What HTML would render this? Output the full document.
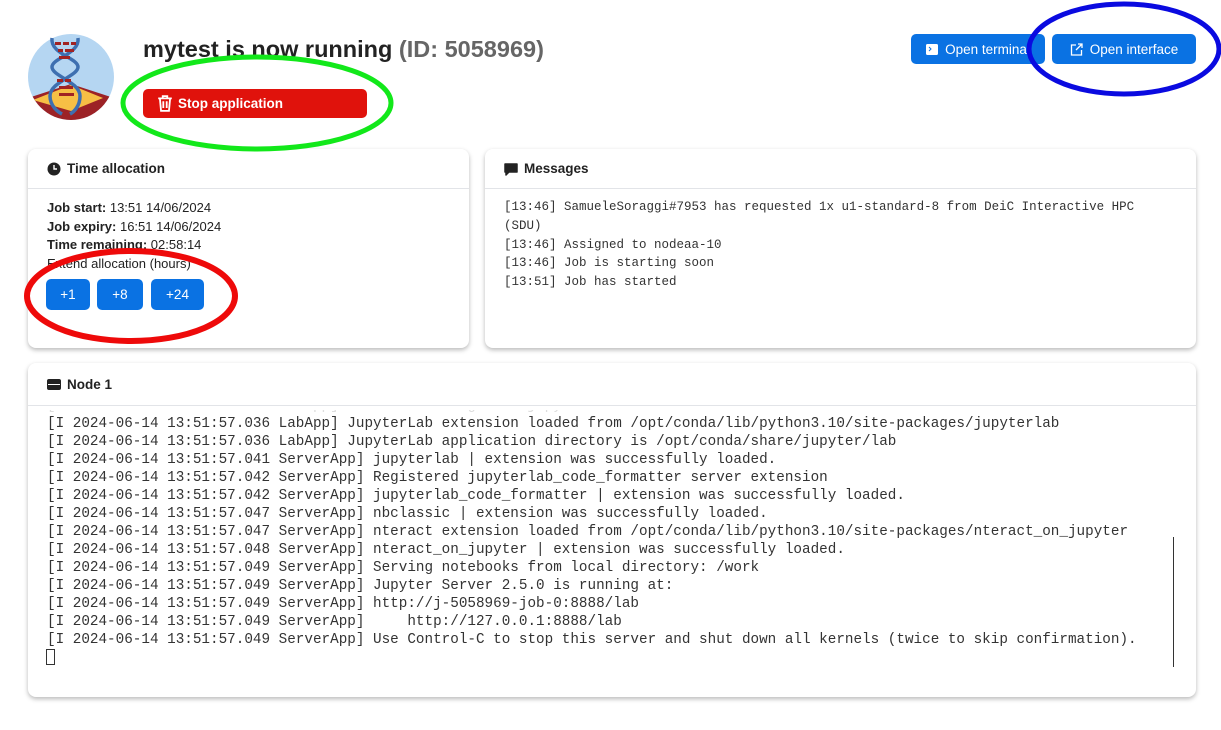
<!DOCTYPE html>
<html><head><meta charset="utf-8"><style>
*{box-sizing:border-box;margin:0;padding:0}
body{width:1221px;height:730px;background:#fff;font-family:"Liberation Sans",sans-serif;color:#222;position:relative;overflow:hidden}
.abs{position:absolute}
.card{position:absolute;background:#fff;border-radius:8px;box-shadow:0 2px 5px rgba(0,0,0,.28)}
.ch{height:40px;border-bottom:1px solid #e2e4e8;display:flex;align-items:center;padding-left:19px;font-weight:bold;font-size:13.5px;gap:6px}
.btn{position:absolute;background:#0a72e3;color:#fff;border-radius:5px;font-size:13.5px;display:flex;align-items:center;justify-content:center}
.mono{font-family:"Liberation Mono",monospace;white-space:pre;color:#333}
</style></head><body>
<svg class="abs" style="left:28px;top:34px" width="86" height="86" viewBox="0 0 86 86">
<defs><clipPath id="c"><circle cx="43" cy="43" r="43"/></clipPath></defs>
<g clip-path="url(#c)">
<rect width="86" height="86" fill="#b5d6f2"/>
<polygon points="0,64 43,50 86,64 86,86 0,86" fill="#9c2226"/>
<polygon points="5,66 43,51 75,64 43,77" fill="#f7bf45"/>
</g>
<path d="M24,4 C22,20 50,24 50,33 C50,42 22,48 22,62 C22,72 30,78 34,80" stroke="#3e6fb0" stroke-width="3.5" fill="none"/>
<path d="M50,4 C52,20 24,24 24,33 C24,42 52,48 52,62 C52,72 46,78 42,80" stroke="#3e6fb0" stroke-width="3.5" fill="none"/>
<g fill="#a12323"><rect x="27" y="8" width="6" height="3"/><rect x="35" y="8" width="6" height="3"/><rect x="43" y="8" width="5" height="3"/><rect x="30" y="15" width="5" height="3"/><rect x="37" y="15" width="9" height="3"/><rect x="31" y="22" width="11" height="3"/>
<rect x="29" y="45" width="6" height="3"/><rect x="37" y="45" width="6" height="3"/><rect x="31" y="52" width="14" height="3"/><rect x="31" y="59" width="15" height="3"/></g>
</svg>
<div class="abs" style="left:143px;top:36px;font-size:23.5px;font-weight:bold;color:#222">mytest is now running <span style="color:#666">(ID: 5058969)</span></div>
<div class="btn" style="left:143px;top:89px;width:224px;height:29px;background:#e0120c;justify-content:flex-start;padding-left:14px;font-weight:bold;font-size:13.5px;gap:5px">
<svg width="16" height="17" viewBox="0 0 14 15"><path d="M1,3h12M5,3V1h4v2M2.5,3l1,11h7l1-11M5.5,5.5v6M8.5,5.5v6" stroke="#fff" stroke-width="1.6" fill="none"/></svg>Stop application</div>
<div class="btn" style="left:911px;top:34px;width:134px;height:30px;gap:7px"><svg width="12" height="11"><rect width="12" height="11" rx="1.5" fill="#fff"/><path d="M3,3l2,2-2,2" stroke="#0a72e3" stroke-width="1" fill="none"/></svg>Open terminal</div>
<div class="btn" style="left:1052px;top:34px;width:144px;height:30px;gap:7px"><svg width="13" height="13" viewBox="0 0 13 13"><path d="M6,2H1.5v10h10V7M8,1h4v4M12,1L6,7" stroke="#fff" stroke-width="1.3" fill="none"/></svg>Open interface</div>

<div class="card" style="left:28px;top:149px;width:441px;height:199px">
<div class="ch"><svg width="14" height="14"><circle cx="7" cy="7" r="6.5" fill="#222"/><path d="M7,3v4h3" stroke="#fff" stroke-width="1.4" fill="none"/></svg>Time allocation</div>
<div style="padding:10px 0 0 19px;font-size:13px;line-height:18.7px">
<div><b>Job start:</b> 13:51 14/06/2024</div><div><b>Job expiry:</b> 16:51 14/06/2024</div><div><b>Time remaining:</b> 02:58:14</div><div>Extend allocation (hours)</div></div>
<div class="btn" style="left:18px;top:130px;width:44px;height:31px">+1</div>
<div class="btn" style="left:69px;top:130px;width:46px;height:31px">+8</div>
<div class="btn" style="left:123px;top:130px;width:53px;height:31px">+24</div>
</div>
<div class="card" style="left:485px;top:149px;width:711px;height:199px">
<div class="ch"><svg width="14" height="14"><path d="M1,2h12v8H5l-3,3v-3H1z" fill="#222" stroke="#222" stroke-linejoin="round" stroke-width="1.5"/></svg>Messages</div>
<div class="mono" style="padding:9px 0 0 19px;font-size:12.5px;line-height:18.75px">[13:46] SamueleSoraggi#7953 has requested 1x u1-standard-8 from DeiC Interactive HPC
(SDU)
[13:46] Assigned to nodeaa-10
[13:46] Job is starting soon
[13:51] Job has started</div>
</div>
<div class="card" style="left:28px;top:363px;width:1168px;height:334px;overflow:hidden">
<div class="ch" style="height:43px"><svg width="14" height="12"><rect y="1" width="14" height="11" rx="2" fill="#222"/><rect x="1" y="6" width="12" height="1" fill="#fff"/></svg>Node 1</div>
<div class="mono" style="position:absolute;left:19px;top:34px;font-size:14.3px;line-height:18px;color:#ddd;clip-path:inset(13px 0 0 0)">[I 2024-06-14 13:51:57.036 LabApp] extension manager is jupyterlab ...</div>
<div class="mono" style="position:absolute;left:19px;top:52px;font-size:14.3px;line-height:18px">[I 2024-06-14 13:51:57.036 LabApp] JupyterLab extension loaded from /opt/conda/lib/python3.10/site-packages/jupyterlab
[I 2024-06-14 13:51:57.036 LabApp] JupyterLab application directory is /opt/conda/share/jupyter/lab
[I 2024-06-14 13:51:57.041 ServerApp] jupyterlab | extension was successfully loaded.
[I 2024-06-14 13:51:57.042 ServerApp] Registered jupyterlab_code_formatter server extension
[I 2024-06-14 13:51:57.042 ServerApp] jupyterlab_code_formatter | extension was successfully loaded.
[I 2024-06-14 13:51:57.047 ServerApp] nbclassic | extension was successfully loaded.
[I 2024-06-14 13:51:57.047 ServerApp] nteract extension loaded from /opt/conda/lib/python3.10/site-packages/nteract_on_jupyter
[I 2024-06-14 13:51:57.048 ServerApp] nteract_on_jupyter | extension was successfully loaded.
[I 2024-06-14 13:51:57.049 ServerApp] Serving notebooks from local directory: /work
[I 2024-06-14 13:51:57.049 ServerApp] Jupyter Server 2.5.0 is running at:
[I 2024-06-14 13:51:57.049 ServerApp] http://j-5058969-job-0:8888/lab
[I 2024-06-14 13:51:57.049 ServerApp]     http://127.0.0.1:8888/lab
[I 2024-06-14 13:51:57.049 ServerApp] Use Control-C to stop this server and shut down all kernels (twice to skip confirmation).</div>
<div class="abs" style="left:18px;top:286px;width:9px;height:16px;border:1px solid #333"></div>
<div class="abs" style="left:1145px;top:174px;width:1px;height:130px;background:#333"></div>
</div>

<svg class="abs" style="left:0;top:0" width="1221" height="730">
<ellipse cx="257" cy="103" rx="134" ry="46" fill="none" stroke="#12e81a" stroke-width="5"/>
<ellipse cx="1124" cy="49" rx="95" ry="45" fill="none" stroke="#0a0ae0" stroke-width="5"/>
<ellipse cx="131" cy="296" rx="104" ry="45" fill="none" stroke="#ee0a0a" stroke-width="6"/>
</svg>
</body></html>
